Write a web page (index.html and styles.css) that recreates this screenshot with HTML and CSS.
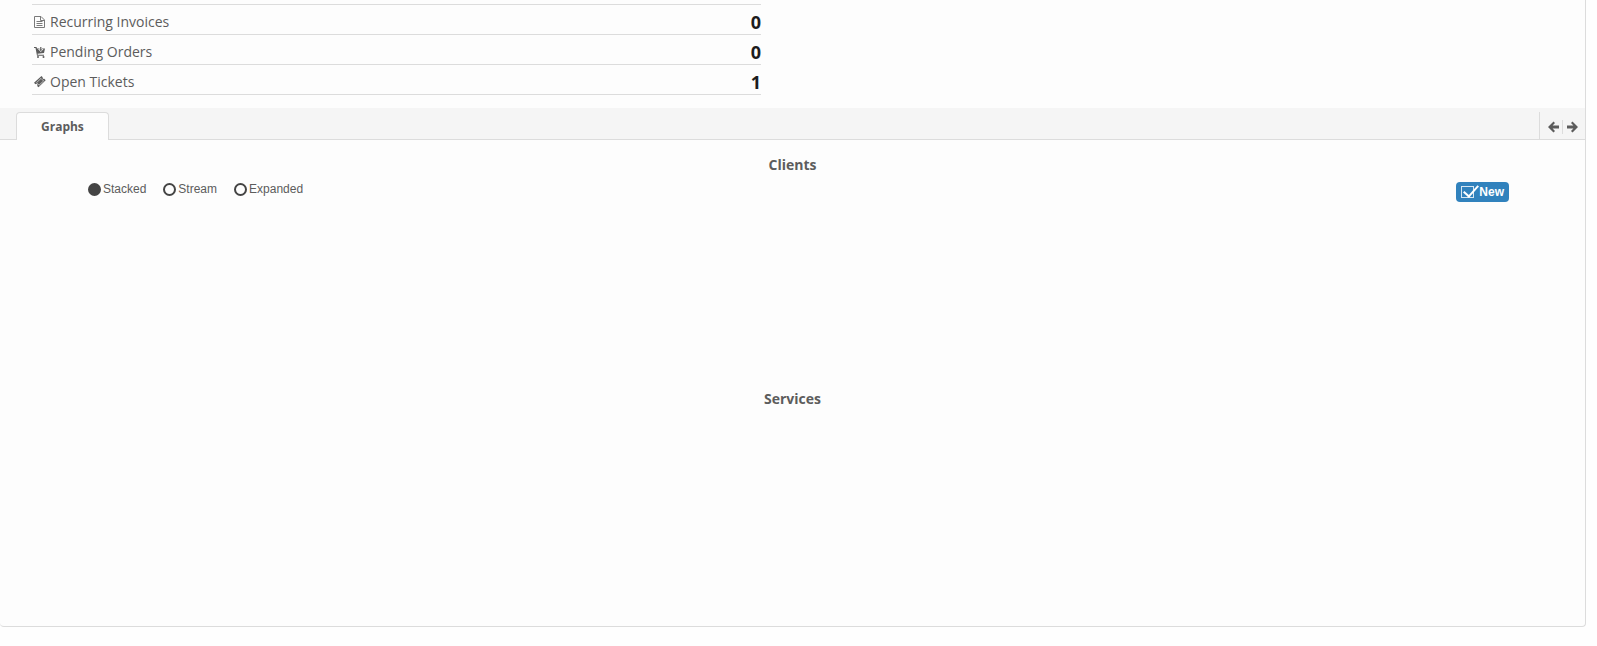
FILE: index.html
```html
<!DOCTYPE html>
<html lang="en">
<head>
    <meta charset="UTF-8">
    <meta name="viewport" content="width=device-width, initial-scale=1.0">
    <title>Dashboard</title>
    <link rel="stylesheet" href="styles.css">
</head>
<body>
    <main class="panel">
        <ul class="stats">
            <li>
                <svg class="icon" viewBox="0 0 13 15" fill="none" stroke="#7a7a7a">
                    <path d="M1.5 2.500h6.500l3.500 3.500v7.500h-10z M7.500 2.500v4h4"/>
                    <path d="M3.500 7.500h6 M3.500 9.500h6 M3.500 11.500h6"/>
                </svg>
                <a href="#">Recurring Invoices</a>
                <strong>0</strong>
            </li>
            <li>
                <svg class="icon" viewBox="0 0 13 15" fill="currentColor">
                    <path d="M1 3h2.500l.5 1.500h8L11 9l-6.500.8.3 1H11v1H4L2.500 4H1z"/>
                    <path fill="#fdfdfd" d="M6.500 3h2.500v2h1.500L7.800 8 5 5h1.500z"/>
                    <path d="M7.200 3h1.200v2.600h1L7.800 7.200 6.200 5.600h1z"/>
                    <circle cx="5" cy="13" r="1"/>
                    <circle cx="10.500" cy="13" r="1"/>
                </svg>
                <a href="#">Pending Orders</a>
                <strong>0</strong>
            </li>
            <li>
                <svg class="icon" viewBox="0 0 13 15">
                    <path fill="currentColor" d="M8.500 2l1.200 1.200a1.200 1.200 0 0 0 1.600 1.600L12.700 6.200 5.500 13.300 4.100 11.900a1.200 1.200 0 0 0-1.700-1.700L1 8.800z"/>
                    <path fill="none" stroke="#fdfdfd" stroke-width=".6" d="M8 4.400l2.600 2.600-4.600 4.200-2.500-2.500z"/>
                </svg>
                <a href="#">Open Tickets</a>
                <strong>1</strong>
            </li>
        </ul>

        <div class="tab-bar">
            <a class="tab" href="#graphs">Graphs</a>
            <div class="tab-nav">
                <button type="button" aria-label="Previous tab">
                    <svg viewBox="0 0 11 12"><path fill="currentColor" d="M5.500.4L7 2 4.600 4.500H11v3H4.600L7 10l-1.500 1.600L0 6z"/></svg>
                </button>
                <button type="button" aria-label="Next tab">
                    <svg viewBox="0 0 11 12"><path fill="currentColor" d="M5.500.4L4 2l2.400 2.500H0v3h6.400L4 10l1.500 1.600L11 6z"/></svg>
                </button>
            </div>
        </div>

        <div id="graphs">
            <section class="graph">
                <h2>Clients</h2>
                <div class="controls">
                    <div class="modes">
                        <label><input type="radio" name="mode" checked>Stacked</label>
                        <label><input type="radio" name="mode">Stream</label>
                        <label><input type="radio" name="mode">Expanded</label>
                    </div>
                    <label class="series"><input type="checkbox" checked>New</label>
                </div>
            </section>
            <section class="graph">
                <h2>Services</h2>
            </section>
        </div>
    </main>
</body>
</html>
```

FILE: styles.css
```css
* {
    box-sizing: border-box;
}

body {
    margin: 0;
    background-color: #fefefe;
    color: #5c5c5c;
    font-family: "Open Sans", "Noto Sans", sans-serif;
    font-size: 14px;
}

a {
    color: inherit;
    text-decoration: none;
}

.panel {
    margin-right: 11px;
    padding-top: 4px;
    background-color: #fdfdfd;
    border: 1px solid #dcdcdc;
    border-width: 0 1px 1px 0;
    border-radius: 0 0 4px 4px;
}

/* summary list */
.stats {
    width: 46%;
    margin: 0 0 13px 32px;
    padding: 0;
    border-top: 1px solid #dcdcdc;
    list-style: none;
}

.stats li {
    display: flex;
    align-items: center;
    gap: 4px;
    height: 30px;
    padding: 4px 0 0 1px;
    border-bottom: 1px solid #dcdcdc;
}

.stats .icon {
    width: 13px;
    height: 15px;
}

.stats strong {
    margin-left: auto;
    color: #1c1c1c;
    font-size: 18px;
    line-height: 26px;
}

/* tabs */
.tab-bar {
    display: flex;
    justify-content: space-between;
    height: 32px;
    padding: 4px 0 0 16px;
    background-color: #f5f5f5;
    border-bottom: 1px solid #dcdcdc;
}

.tab {
    height: 28px;
    padding: 0 24px;
    background-color: #fdfdfd;
    border: 1px solid #dcdcdc;
    border-bottom: 0;
    border-radius: 4px 4px 0 0;
    font-size: 12px;
    font-weight: bold;
    line-height: 28px;
}

.tab-nav {
    display: flex;
    align-items: center;
    padding: 2px 4px 0 4px;
    border-left: 1px solid #dcdcdc;
}

.tab-nav button {
    display: flex;
    align-items: center;
    height: 14px;
    padding: 0 3px 0 4px;
    border: 0;
    background: none;
    color: #5c5c5c;
    cursor: pointer;
}

.tab-nav button + button {
    border-left: 1px solid #dcdcdc;
}

.tab-nav svg {
    width: 11px;
    height: 12px;
}

/* graphs */
.graph {
    height: 234px;
    padding: 15px 76px 0 88px;
}

.graph + .graph {
    height: 252px;
}

.graph h2 {
    margin: 0 -76px 0 -88px;
    font-size: 14px;
    line-height: 20px;
    text-align: center;
}

.controls {
    display: flex;
    justify-content: space-between;
    align-items: flex-start;
    padding-top: 7px;
    font-family: "Liberation Sans", Arial, sans-serif;
    font-size: 12px;
}

.modes {
    display: flex;
    gap: 17px;
}

.modes label {
    display: flex;
    align-items: center;
    gap: 2px;
    line-height: 14px;
}

.controls input {
    appearance: none;
    margin: 0;
}

.modes input {
    width: 13px;
    height: 13px;
    border: 2px solid #444;
    border-radius: 50%;
}

.modes input:checked {
    background-color: #444;
}

.series {
    display: flex;
    align-items: center;
    gap: 5px;
    height: 20px;
    padding: 0 5px;
    background-color: #3182bd;
    border-radius: 4px;
    color: #fff;
    font-weight: bold;
}

.series input {
    position: relative;
    width: 13px;
    height: 12px;
    border: 1px solid #d6e6f2;
}

/* tick runs past the corner of its box */
.series input:checked::before {
    content: '';
    position: absolute;
    top: -5px;
    left: 5px;
    width: 6px;
    height: 13px;
    border: solid #fff;
    border-width: 0 2px 2px 0;
    transform: rotate(42deg);
}
```
